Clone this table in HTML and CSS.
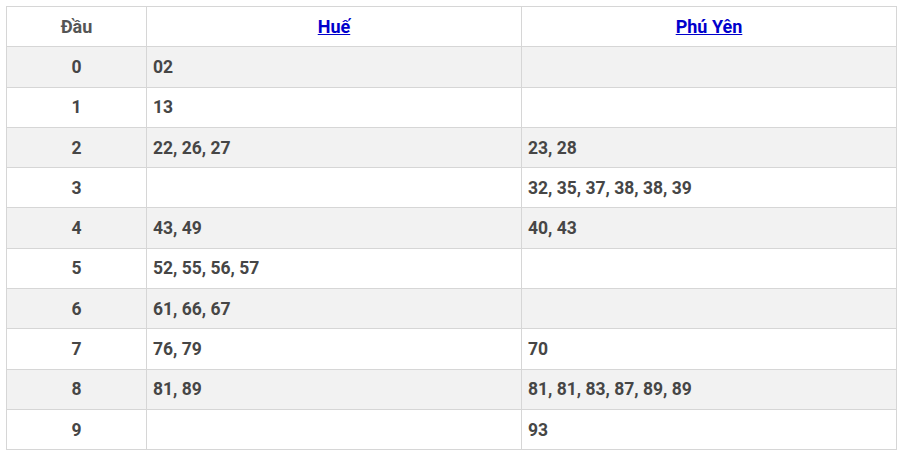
FILE: index.html
```html
<!DOCTYPE html>
<html lang="vi">
<head>
<meta charset="utf-8">
<link rel="stylesheet" href="styles.css">
</head>
<body>
<table class="loto">
  <thead>
    <tr><th class="dau">Đầu</th><th class="prov"><a href="#">Huế</a></th><th class="prov"><a href="#">Phú Yên</a></th></tr>
  </thead>
  <tbody>
    <tr><td class="dau">0</td><td>02</td><td></td></tr>
    <tr><td class="dau">1</td><td>13</td><td></td></tr>
    <tr><td class="dau">2</td><td>22, 26, 27</td><td>23, 28</td></tr>
    <tr><td class="dau">3</td><td></td><td>32, 35, 37, 38, 38, 39</td></tr>
    <tr><td class="dau">4</td><td>43, 49</td><td>40, 43</td></tr>
    <tr><td class="dau">5</td><td>52, 55, 56, 57</td><td></td></tr>
    <tr><td class="dau">6</td><td>61, 66, 67</td><td></td></tr>
    <tr><td class="dau">7</td><td>76, 79</td><td>70</td></tr>
    <tr><td class="dau">8</td><td>81, 89</td><td>81, 81, 83, 87, 89, 89</td></tr>
    <tr><td class="dau">9</td><td></td><td>93</td></tr>
  </tbody>
</table>
</body>
</html>
```
FILE: styles.css
```css
html, body {
  margin: 0;
  background: #fff;
}
body {
  padding: 6px;
  font-family: Roboto, "Liberation Sans", sans-serif;
}
.loto {
  width: 891px;
  border-collapse: collapse;
  table-layout: fixed;
  font-size: 17.5px;
  font-weight: 700;
  color: #464646;
}
.loto th, .loto td {
  border: 1px solid #d6d6d6;
  height: 40.3px;
  padding: 0 6px;
  line-height: 20px;
  box-sizing: border-box;
  text-align: left;
}
.loto th {
  font-size: 18px;
  text-align: center;
  color: #555;
}
.loto .dau {
  width: 140px;
  text-align: center;
}
.loto th a {
  color: #0000cc;
  text-decoration: underline;
}
.loto tbody tr:nth-child(odd) {
  background: #f2f2f2;
}
```
